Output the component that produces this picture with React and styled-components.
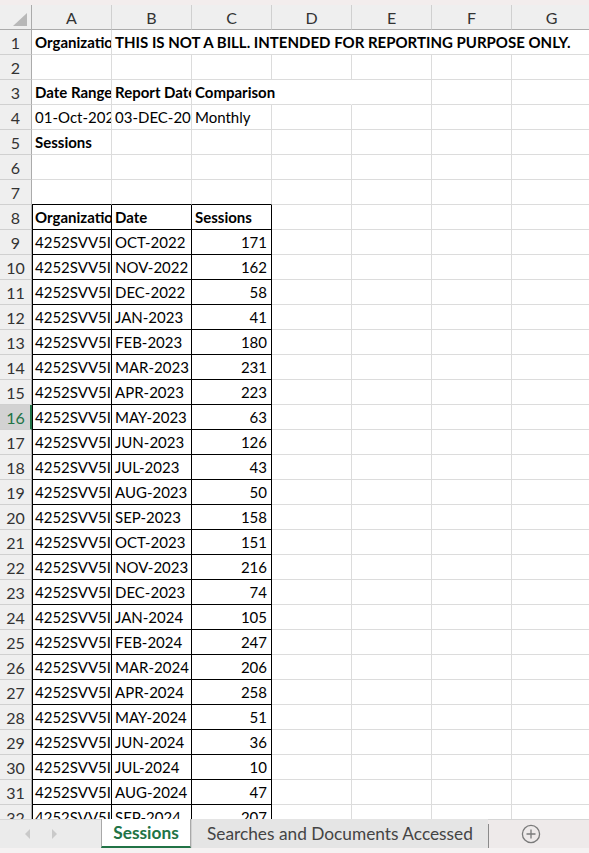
import React from 'react';
import styled, { createGlobalStyle } from 'styled-components';

const GlobalStyle = createGlobalStyle`
    html, body {
        margin: 0;
        padding: 0;
        background: #ffffff;
    }
    body {
        font-family: Lato, "Open Sans", sans-serif;
    }
`;

const COLUMNS = ['A', 'B', 'C', 'D', 'E', 'F', 'G'];

const sessions = [
    ['OCT-2022', 171], ['NOV-2022', 162], ['DEC-2022', 58], ['JAN-2023', 41],
    ['FEB-2023', 180], ['MAR-2023', 231], ['APR-2023', 223], ['MAY-2023', 63],
    ['JUN-2023', 126], ['JUL-2023', 43], ['AUG-2023', 50], ['SEP-2023', 158],
    ['OCT-2023', 151], ['NOV-2023', 216], ['DEC-2023', 74], ['JAN-2024', 105],
    ['FEB-2024', 247], ['MAR-2024', 206], ['APR-2024', 258], ['MAY-2024', 51],
    ['JUN-2024', 36], ['JUL-2024', 10], ['AUG-2024', 47], ['SEP-2024', 207],
];

const ACTIVE_ROW = 16;

const App = () => {
    const emptyRow = (n, under) => (
        <React.Fragment key={n}>
            <RowHeader>{n}</RowHeader>
            {COLUMNS.map((c, i) => <Cell key={c} $under={under && i < 3} />)}
        </React.Fragment>
    );

    return (
        <Window>
            <GlobalStyle />
            <TopStrip />
            <SheetArea>
                <Grid>
                    <Corner><CornerMark /></Corner>
                    {COLUMNS.map(c => <ColHeader key={c}>{c}</ColHeader>)}

                    <RowHeader>1</RowHeader>
                    <Cell $bold>Organization ID</Cell>
                    <Cell $bold $span={6} $clear>THIS IS NOT A BILL. INTENDED FOR REPORTING PURPOSE ONLY.</Cell>

                    {emptyRow(2)}

                    <RowHeader>3</RowHeader>
                    <Cell $bold>Date Range</Cell>
                    <Cell $bold>Report Date</Cell>
                    <Cell $bold $span={2} $clear>Comparison</Cell>
                    <Cell /><Cell /><Cell />

                    <RowHeader>4</RowHeader>
                    <Cell>01-Oct-2022 - 30-Sep-2024</Cell>
                    <Cell>03-DEC-2024</Cell>
                    <Cell>Monthly</Cell>
                    <Cell /><Cell /><Cell /><Cell />

                    <RowHeader>5</RowHeader>
                    <Cell $bold>Sessions</Cell>
                    <Cell /><Cell /><Cell /><Cell /><Cell /><Cell />

                    {emptyRow(6)}
                    {emptyRow(7, true)}

                    <RowHeader>8</RowHeader>
                    <Cell $bold $box $first>Organization ID</Cell>
                    <Cell $bold $box>Date</Cell>
                    <Cell $bold $box>Sessions</Cell>
                    <Cell /><Cell /><Cell /><Cell />

                    {sessions.map(([date, count], i) => {
                        const n = i + 9;
                        return (
                            <React.Fragment key={n}>
                                <RowHeader $active={n === ACTIVE_ROW}>{n}</RowHeader>
                                <Cell $box $first>4252SVV5IQ00</Cell>
                                <Cell $box>{date}</Cell>
                                <Cell $box $align="right">{count}</Cell>
                                <Cell /><Cell /><Cell /><Cell />
                            </React.Fragment>
                        );
                    })}
                </Grid>
            </SheetArea>

            <TabBar>
                <TabNav>
                    <svg width="7" height="10" viewBox="0 0 7 10"><polygon points="6,0 6,10 1,5" fill="#c9c9c9" /></svg>
                    <svg width="7" height="10" viewBox="0 0 7 10"><polygon points="1,0 1,10 6,5" fill="#c9c9c9" /></svg>
                </TabNav>
                <SheetTab $active>Sessions</SheetTab>
                <SheetTab>Searches and Documents Accessed</SheetTab>
                <TabDivider />
                <AddSheet>
                    <svg width="20" height="20" viewBox="0 0 20 20">
                        <circle cx="10" cy="10" r="8.6" fill="none" stroke="#7a7a7a" strokeWidth="1.3" />
                        <path d="M10 5.5v9M5.5 10h9" stroke="#7a7a7a" strokeWidth="1.3" />
                    </svg>
                </AddSheet>
                <TabFill />
            </TabBar>
            <BottomStrip />
        </Window>
    );
};

export default App;

const Window = styled.div`
    width: 589px;
    height: 853px;
    display: flex;
    flex-direction: column;
    overflow: hidden;
    font-family: Lato, "Open Sans", sans-serif;
`;

const TopStrip = styled.div`
    height: 5px;
    flex: none;
    background: #f3eded;
`;

const SheetArea = styled.div`
    flex: 1;
    overflow: hidden;
    background: #ffffff;
`;

const Grid = styled.div`
    display: grid;
    grid-template-columns: 32px repeat(7, 80px);
    grid-auto-rows: 25px;
    width: 592px;
`;

const Corner = styled.div`
    background: #efefef;
    border-right: 1px solid #ababab;
    border-bottom: 1px solid #ababab;
    box-sizing: border-box;
    display: flex;
    align-items: flex-end;
    justify-content: flex-end;
    padding: 0 4px 3px 0;
`;

const CornerMark = styled.div`
    width: 14px;
    height: 13px;
    background: #b8b8b8;
    clip-path: polygon(100% 0, 100% 100%, 0 100%);
`;

const ColHeader = styled.div`
    background: #efefef;
    border-right: 1px solid #d0d0d0;
    border-bottom: 1px solid #ababab;
    box-sizing: border-box;
    display: flex;
    align-items: center;
    justify-content: center;
    font-size: 16px;
    color: #333333;
`;

const RowHeader = styled.div`
    background: ${p => p.$active ? '#d2d2d2' : '#efefef'};
    color: ${p => p.$active ? '#217346' : '#333333'};
    border-right: ${p => p.$active ? '2px solid #217346' : '1px solid #ababab'};
    border-bottom: 1px solid #d0d0d0;
    box-sizing: border-box;
    display: flex;
    align-items: center;
    justify-content: center;
    font-size: 16px;
    padding-left: ${p => p.$active ? '1px' : '0'};
`;

const Cell = styled.div`
    grid-column: ${p => p.$span ? `span ${p.$span}` : 'auto'};
    box-sizing: border-box;
    border-right: 1px solid ${p => p.$box ? '#000000' : p.$clear ? 'transparent' : '#dcdcdc'};
    border-bottom: 1px solid ${p => (p.$box || p.$under) ? '#000000' : '#dcdcdc'};
    box-shadow: ${p => p.$first ? 'inset 1px 0 0 #000000' : 'none'};
    padding: 0 4px 0 3px;
    display: flex;
    align-items: center;
    justify-content: ${p => p.$align === 'right' ? 'flex-end' : 'flex-start'};
    overflow: hidden;
    white-space: nowrap;
    font-size: 15px;
    font-weight: ${p => p.$bold ? 700 : 400};
    color: #000000;
`;

const TabBar = styled.div`
    height: 29px;
    flex: none;
    display: flex;
    background: #eeeaea;
    border-top: 1px solid #d6d6d6;
    box-sizing: border-box;
`;

const TabNav = styled.div`
    width: 101px;
    flex: none;
    display: flex;
    align-items: center;
    gap: 20px;
    padding-left: 24px;
    box-sizing: border-box;
    background: #ebebeb;
`;

const SheetTab = styled.div`
    flex: none;
    display: flex;
    align-items: center;
    box-sizing: border-box;
    margin-top: -1px;
    padding: ${p => p.$active ? '0 4px' : '0 0 0 15px'};
    background: ${p => p.$active ? '#ffffff' : '#e5e5e5'};
    border-left: 1px solid ${p => p.$active ? '#a8a8a8' : '#d0d0d0'};
    border-right: ${p => p.$active ? '1px solid #a8a8a8' : 'none'};
    border-bottom: ${p => p.$active ? '2px solid #217346' : 'none'};
    color: ${p => p.$active ? '#217346' : '#444444'};
    font-weight: ${p => p.$active ? 700 : 400};
    font-size: 17.3px;
    white-space: nowrap;
    overflow: hidden;
    width: ${p => p.$active ? '90px' : '297px'};
    justify-content: ${p => p.$active ? 'center' : 'flex-start'};
`;

const TabDivider = styled.div`
    width: 1px;
    margin: 4px 0 0 0;
    background: #8a8a8a;
`;

const AddSheet = styled.div`
    width: 84px;
    flex: none;
    display: flex;
    align-items: center;
    justify-content: center;
`;

const TabFill = styled.div`
    flex: 1;
`;

const BottomStrip = styled.div`
    height: 5px;
    flex: none;
    background: #f5f2f2;
`;
